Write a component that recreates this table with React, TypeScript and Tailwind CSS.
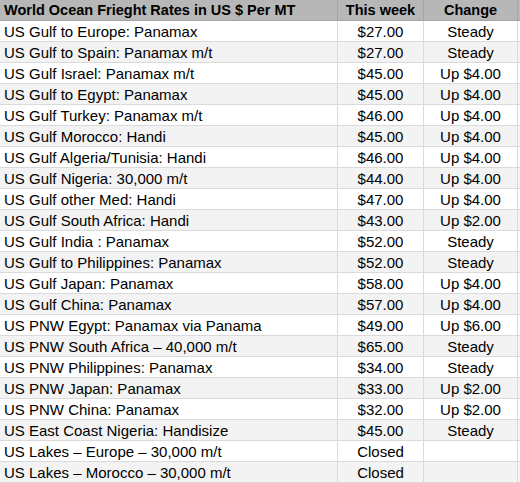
import React from "react";

const rows: [string, string, string][] = [
  ["US Gulf to Europe: Panamax", "$27.00", "Steady"],
  ["US Gulf to Spain: Panamax m/t", "$27.00", "Steady"],
  ["US Gulf Israel: Panamax m/t", "$45.00", "Up $4.00"],
  ["US Gulf to Egypt: Panamax", "$45.00", "Up $4.00"],
  ["US Gulf Turkey: Panamax m/t", "$46.00", "Up $4.00"],
  ["US Gulf Morocco: Handi", "$45.00", "Up $4.00"],
  ["US Gulf Algeria/Tunisia: Handi", "$46.00", "Up $4.00"],
  ["US Gulf Nigeria: 30,000 m/t", "$44.00", "Up $4.00"],
  ["US Gulf other Med: Handi", "$47.00", "Up $4.00"],
  ["US Gulf South Africa: Handi", "$43.00", "Up $2.00"],
  ["US Gulf India : Panamax", "$52.00", "Steady"],
  ["US Gulf to Philippines: Panamax", "$52.00", "Steady"],
  ["US Gulf Japan: Panamax", "$58.00", "Up $4.00"],
  ["US Gulf China: Panamax", "$57.00", "Up $4.00"],
  ["US PNW Egypt: Panamax via Panama", "$49.00", "Up $6.00"],
  ["US PNW South Africa – 40,000 m/t", "$65.00", "Steady"],
  ["US PNW Philippines: Panamax", "$34.00", "Steady"],
  ["US PNW Japan: Panamax", "$33.00", "Up $2.00"],
  ["US PNW China: Panamax", "$32.00", "Up $2.00"],
  ["US East Coast Nigeria: Handisize", "$45.00", "Steady"],
  ["US Lakes – Europe – 30,000 m/t", "Closed", ""],
  ["US Lakes – Morocco – 30,000 m/t", "Closed", ""],
];

export default function App() {
  return (
    <div
      className="w-[520px] h-[483px] bg-white overflow-hidden text-[15px] text-black"
      style={{ fontFamily: '"Liberation Sans", Arial, sans-serif' }}
    >
      <div className="grid grid-cols-[338px_86px_94px_2px] h-[21px] bg-[#b7b7b7] border-b border-[#a5a5a5] font-bold text-[14.5px] leading-[20px]">
        <div className="pl-[4px] border-r border-[#a5a5a5] whitespace-nowrap">World Ocean Frieght Rates in US $ Per MT</div>
        <div className="text-center border-r border-[#a5a5a5]">This week</div>
        <div className="text-center border-r border-[#a5a5a5]">Change</div>
        <div />
      </div>
      {rows.map((r, i) => (
        <div
          key={i}
          className={
            "grid grid-cols-[338px_86px_94px_2px] h-[21px] border-b border-[#dadada] leading-[21px] " +
            (i % 2 === 1 ? "bg-[#f3f3f3]" : "bg-white")
          }
        >
          <div className="pl-[4px] border-r border-[#dadada] whitespace-nowrap">{r[0]}</div>
          <div className="text-center border-r border-[#dadada]">{r[1]}</div>
          <div className="text-center border-r border-[#dadada]">{r[2]}</div>
          <div />
        </div>
      ))}
    </div>
  );
}
